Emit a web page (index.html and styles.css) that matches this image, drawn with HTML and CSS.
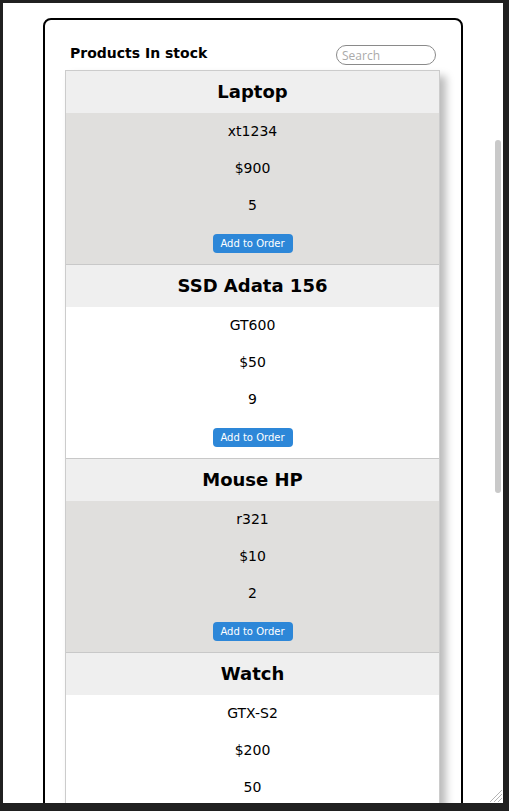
FILE: index.html
```html
<!DOCTYPE html>
<html>
<head>
<meta charset="utf-8">
<link rel="stylesheet" href="styles.css">
</head>
<body>
<div class="frame">
  <div class="card">
    <div class="top">
      <h2 class="title">Products In stock</h2>
      <input class="search" type="text" placeholder="Search">
    </div>
    <div class="list">
      <div class="item odd">
        <div class="name">Laptop</div>
        <div class="details">
          <p>xt1234</p>
          <p>$900</p>
          <p>5</p>
          <button class="btn">Add to Order</button>
        </div>
      </div>
      <div class="item">
        <div class="name">SSD Adata 156</div>
        <div class="details">
          <p>GT600</p>
          <p>$50</p>
          <p>9</p>
          <button class="btn">Add to Order</button>
        </div>
      </div>
      <div class="item odd">
        <div class="name">Mouse HP</div>
        <div class="details">
          <p>r321</p>
          <p>$10</p>
          <p>2</p>
          <button class="btn">Add to Order</button>
        </div>
      </div>
      <div class="item">
        <div class="name">Watch</div>
        <div class="details">
          <p>GTX-S2</p>
          <p>$200</p>
          <p>50</p>
          <button class="btn">Add to Order</button>
        </div>
      </div>
    </div>
  </div>
  <div class="thumb"></div>
  <svg class="grip" width="14" height="14" viewBox="0 0 14 14">
    <line x1="1" y1="13" x2="13" y2="1" stroke="#b4b4b4" stroke-width="1"/>
    <line x1="5" y1="13" x2="13" y2="5" stroke="#b4b4b4" stroke-width="1"/>
    <line x1="9" y1="13" x2="13" y2="9" stroke="#b4b4b4" stroke-width="1"/>
  </svg>
</div>
</body>
</html>
```

FILE: styles.css
```css
html, body {
  margin: 0;
  padding: 0;
}
body {
  background: #202020;
  width: 509px;
  height: 811px;
  overflow: hidden;
  font-family: "DejaVu Sans", sans-serif;
  color: #000;
}
.frame {
  position: relative;
  margin: 3px 0 0 3px;
  width: 500px;
  height: 800px;
  background: #fff;
  overflow: hidden;
}
.card {
  box-sizing: border-box;
  width: 420px;
  margin: 15px auto 0;
  border: 2px solid #000;
  border-radius: 8px;
  padding: 25px 0 30px;
}
.top {
  width: 375px;
  margin: 0 0 0 20px;
  box-sizing: border-box;
  padding: 0 4px 0 5px;
  display: flex;
  justify-content: space-between;
  align-items: flex-start;
}
.title {
  margin: 0;
  font-size: 14px;
  font-weight: bold;
  line-height: 16px;
}
.search {
  box-sizing: border-box;
  width: 100px;
  height: 20px;
  margin: 0;
  padding: 0 5px;
  border: 1px solid #8a8a8a;
  border-radius: 10px;
  font-family: "Open Sans", sans-serif;
  font-size: 12px;
  outline: none;
}
.search::placeholder {
  color: #aaa;
}
.list {
  box-sizing: border-box;
  width: 375px;
  margin: 5px 0 0 20px;
  border: 1px solid #ccc;
  box-shadow: 6px 6px 8px #bbb;
}
.item {
  border-bottom: 1px solid #c8c8c8;
}
.name {
  height: 42px;
  line-height: 42px;
  text-align: center;
  background: #efefef;
  font-size: 18px;
  font-weight: bold;
}
.details {
  display: flex;
  flex-direction: column;
  align-items: center;
  gap: 20px;
  padding: 10px 0 11px;
  background: #fff;
}
.item.odd .details {
  background: #e0dfdd;
}
.details p {
  margin: 0;
  font-size: 14px;
  line-height: 17px;
}
.btn {
  margin: 0;
  border: none;
  border-radius: 4px;
  background: #2d87d8;
  color: #fff;
  font-family: "DejaVu Sans", sans-serif;
  font-size: 10px;
  line-height: 13px;
  height: 19px;
  padding: 3px 7px;
  width: 80px;
}
.thumb {
  position: absolute;
  right: 2px;
  top: 137px;
  width: 6px;
  height: 353px;
  border-radius: 3px;
  background: #c9c9c9;
}
.grip {
  position: absolute;
  right: 0;
  bottom: 0;
}
```
